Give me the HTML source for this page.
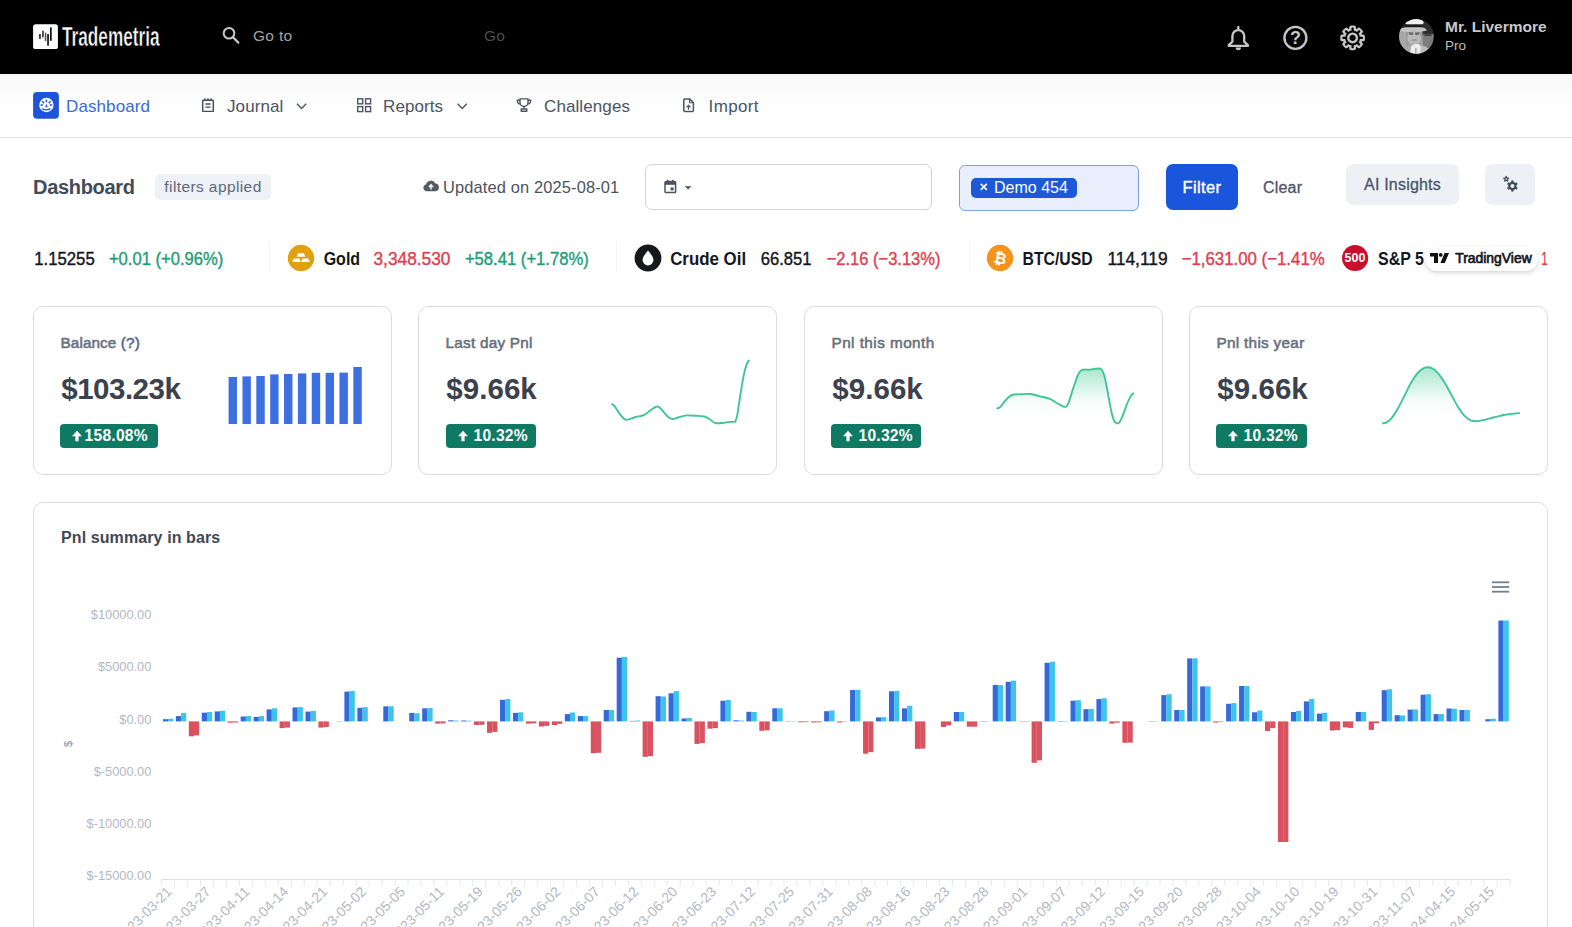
<!DOCTYPE html>
<html><head><meta charset="utf-8"><title>Trademetria</title>
<style>
*{box-sizing:border-box;margin:0;padding:0}
html,body{width:1572px;height:927px;overflow:hidden;background:#fff}
body{font-family:"Liberation Sans",sans-serif;color:#4a5568;position:relative}
.abs{position:absolute;white-space:nowrap}
svg text{font-family:"Liberation Sans",sans-serif}
.topbar{position:absolute;left:0;top:0;width:1572px;height:74px;background:#000}
.navbar{position:absolute;left:0;top:74px;width:1572px;height:64px;background:linear-gradient(#f7f7f7,#fdfdfd 45%,#fff 70%);border-bottom:1px solid #dedede}
.nav{font-size:17px;color:#4b5563;line-height:20px;letter-spacing:.1px}
.card{position:absolute;border:1px solid #dcdcdc;border-radius:10px;background:#fff}
.ctitle{font-size:15.3px;color:#68707d;-webkit-text-stroke:.55px #68707d;line-height:18px;letter-spacing:.1px}
.cval{font-size:29.5px;font-weight:bold;color:#3b414d;line-height:32px;letter-spacing:-0.2px}
.badge{position:absolute;height:24px;border-radius:4px;background:#0e7a63;color:#fff;font-weight:bold;font-size:15.6px;line-height:24px;letter-spacing:.25px}
.tk{font-size:17.5px;line-height:22px;color:#131722}
.tkb{font-weight:bold}
.up{color:#22a27b}.dn{color:#e0404f}
.sep{position:absolute;top:241px;width:1px;height:32px;background:#f4f4f4}
</style></head>
<body>

<div class="topbar">
 <svg class="abs" style="left:0;top:0" width="1572" height="74" viewBox="0 0 1572 74">
  <!-- logo -->
  <rect x="33.1" y="24.2" width="24.8" height="24.8" rx="2.6" fill="#fff"/>
  <rect x="39.1" y="34.1" width="1.7" height="4.8" fill="#222"/>
  <rect x="42.2" y="30.7" width="1.5" height="6.7" fill="#222"/>
  <rect x="44.8" y="32.7" width="1.5" height="8.5" fill="#555"/>
  <rect x="47.2" y="34.1" width="1.7" height="11.6" fill="#111"/>
  <rect x="50.0" y="27.4" width="1.7" height="13.4" fill="#111"/>
  <text x="62" y="46.3" font-size="28" font-weight="bold" fill="#fff" stroke="#000" stroke-width=".55" textLength="97.5" lengthAdjust="spacingAndGlyphs">Trademetria</text>
  <!-- search -->
  <circle cx="229" cy="33.2" r="5.3" fill="none" stroke="#c8c8c8" stroke-width="2"/>
  <line x1="233" y1="37.3" x2="238.3" y2="42.6" stroke="#c8c8c8" stroke-width="2.2" stroke-linecap="round"/>
  <text x="253" y="41" font-size="15.5" fill="#a3a3a3" letter-spacing="0.3">Go to</text>
  <text x="484" y="41" font-size="15.5" fill="#4d4d4d" letter-spacing="0.3">Go</text>
  <!-- bell -->
  <g fill="none" stroke="#c6c6c6" stroke-width="2.3" stroke-linejoin="round" stroke-linecap="round">
   <path d="M1232.400 41.600 V36 a5.900 5.900 0 0 1 11.800 0 V41.600 l3.700 3.500 v.800 H1228.700 v-.800 z"/>
   <path d="M1238.300 27 v2.200"/>
  </g>
  <path d="M1235.600 47.600 h5.400 a2.700 2.700 0 0 1 -5.400 0 z" fill="#c6c6c6"/>
  <!-- help -->
  <circle cx="1295.400" cy="37.850" r="11" fill="none" stroke="#c6c6c6" stroke-width="2.400"/>
  <text x="1295.500" y="44.300" font-size="18" font-weight="bold" fill="#c6c6c6" text-anchor="middle">?</text>
  <!-- gear -->
  <g transform="translate(1352.600 37.900)">
   <g fill="#c6c6c6"><rect x="-3.400" y="-12.300" width="6.800" height="6" rx="1.900" transform="rotate(0)"/><rect x="-3.400" y="-12.300" width="6.800" height="6" rx="1.900" transform="rotate(45)"/><rect x="-3.400" y="-12.300" width="6.800" height="6" rx="1.900" transform="rotate(90)"/><rect x="-3.400" y="-12.300" width="6.800" height="6" rx="1.900" transform="rotate(135)"/><rect x="-3.400" y="-12.300" width="6.800" height="6" rx="1.900" transform="rotate(180)"/><rect x="-3.400" y="-12.300" width="6.800" height="6" rx="1.900" transform="rotate(225)"/><rect x="-3.400" y="-12.300" width="6.800" height="6" rx="1.900" transform="rotate(270)"/><rect x="-3.400" y="-12.300" width="6.800" height="6" rx="1.900" transform="rotate(315)"/></g>
   <circle r="9.800" fill="#c6c6c6"/>
   <g fill="#000"><rect x="-1.100" y="-10.300" width="2.200" height="4" rx=".8" transform="rotate(0)"/><rect x="-1.100" y="-10.300" width="2.200" height="4" rx=".8" transform="rotate(45)"/><rect x="-1.100" y="-10.300" width="2.200" height="4" rx=".8" transform="rotate(90)"/><rect x="-1.100" y="-10.300" width="2.200" height="4" rx=".8" transform="rotate(135)"/><rect x="-1.100" y="-10.300" width="2.200" height="4" rx=".8" transform="rotate(180)"/><rect x="-1.100" y="-10.300" width="2.200" height="4" rx=".8" transform="rotate(225)"/><rect x="-1.100" y="-10.300" width="2.200" height="4" rx=".8" transform="rotate(270)"/><rect x="-1.100" y="-10.300" width="2.200" height="4" rx=".8" transform="rotate(315)"/></g>
   <circle r="7.400" fill="#000"/>
   <circle r="4.300" fill="none" stroke="#c6c6c6" stroke-width="2.400"/>
  </g>
  <!-- avatar -->
  <defs>
   <clipPath id="avc"><circle cx="1416.4" cy="36.5" r="17.4"/></clipPath>
   <filter id="avb" x="-10%" y="-10%" width="120%" height="120%"><feGaussianBlur stdDeviation=".7"/></filter>
  </defs>
  <g clip-path="url(#avc)"><g filter="url(#avb)">
   <rect x="1396" y="16" width="42" height="42" fill="#9c9c9c"/>
   <rect x="1396" y="16" width="42" height="12" fill="#2a2a2a"/>
   <rect x="1422.500" y="16" width="16" height="20" fill="#2e2e2e"/>
   <rect x="1423" y="34" width="16" height="14" fill="#7b7b7b"/>
   <rect x="1424.500" y="34.300" width="7" height="1.600" fill="#3a3a3a"/>
   <rect x="1396" y="30" width="10" height="28" fill="#a8a8a8"/>
   <ellipse cx="1414.400" cy="22.600" rx="9.300" ry="3.900" fill="#f1f1f1"/>
   <rect x="1405" y="24.300" width="17.600" height="3.200" fill="#1f1f1f"/>
   <path d="M1399.500 30.900 q2 -3.600 7 -3.600 h14 q4.500 0 6.500 3.200 q-6 1.600 -13.500 1.600 t-14 -1.200 z" fill="#c4c4c4"/>
   <ellipse cx="1414.200" cy="38" rx="6.800" ry="7.600" fill="#b9b9b9"/>
   <rect x="1409" y="32.200" width="4.300" height="2.800" rx="1" fill="#6d6d6d"/>
   <rect x="1415" y="32.200" width="4.300" height="2.800" rx="1" fill="#6d6d6d"/>
   <rect x="1411.800" y="39.400" width="5" height="1.300" fill="#8d8d8d"/>
   <path d="M1402 56 l4 -9 l6 -3.500 h6 l8 3 l5 9.500 z" fill="#a9a9a9"/>
   <path d="M1409.700 56 l1.500 -10 l3.300 -2 h3.800 l2.600 2 l-.5 10 z" fill="#ececec"/>
   <rect x="1415.300" y="48" width="1.200" height="8" fill="#9a9a9a"/>
   <path d="M1420.800 46 l6.500 1.500 l4 8.500 h-10.500 z" fill="#bdbdbd"/>
  </g></g>
  <text x="1445" y="32" font-size="15.5" font-weight="bold" fill="#c9c9c9">Mr. Livermore</text>
  <text x="1445" y="49.6" font-size="13.5" fill="#bdbdbd">Pro</text>
 </svg>
</div>
<div class="navbar"></div>
<svg class="abs" style="left:0;top:74px" width="1572" height="64" viewBox="0 74 1572 64">
 <!-- dashboard icon -->
 <rect x="33.1" y="92.1" width="25.8" height="26.7" rx="4" fill="#1d54da"/>
 <circle cx="46.4" cy="105" r="7.2" fill="#fff"/>
 <g stroke="#1d54da" stroke-width="1.5" fill="none" stroke-linecap="butt">
  <path d="M46.4 99.6 v2.6"/><path d="M42.2 101.3 l1.9 1.9"/><path d="M50.6 101.3 l-1.9 1.9"/>
  <path d="M40.6 105 h2.4"/><path d="M52.2 105 h-2.4"/>
  <path d="M42.4 108.6 q4 2.600 8 0" stroke-width="1.4"/>
 </g>
 <path d="M46.400 103.800 l1.300 3.400 h-2.600 z" fill="#1d54da"/>
 <!-- journal icon -->
 <g fill="none" stroke="#454d5a" stroke-width="1.400">
  <rect x="202.700" y="100.200" width="10.600" height="11.200" rx=".5"/>
  <path d="M205 98.300 v2.400 M208 98.300 v2.400 M211 98.300 v2.400"/>
  <path d="M205.400 104 h5.200 M205.400 107.100 h5.200" stroke-width="1.300"/>
 </g>
 <path d="M297 103.8 l4.6 4.6 l4.6 -4.6" fill="none" stroke="#4b5563" stroke-width="1.4"/>
 <!-- reports icon -->
 <g fill="none" stroke="#4b5563" stroke-width="1.4">
  <rect x="357.7" y="98.8" width="5" height="5"/><rect x="365.6" y="98.8" width="5" height="5"/>
  <rect x="357.7" y="106.6" width="5" height="5"/><rect x="365.6" y="106.6" width="5" height="5"/>
 </g>
 <path d="M457.6 103.8 l4.6 4.6 l4.6 -4.6" fill="none" stroke="#4b5563" stroke-width="1.4"/>
 <!-- trophy -->
 <g fill="none" stroke="#4b5563" stroke-width="1.4" stroke-linejoin="round">
  <path d="M520 98.9 h8 v3.6 a4 4 0 0 1 -8 0 z"/>
  <path d="M520 100.3 h-2.6 v1 a2.6 2.6 0 0 0 2.9 2.6 M528 100.3 h2.6 v1 a2.6 2.6 0 0 1 -2.9 2.6"/>
  <path d="M524 106.6 v2.2 M521.2 111.2 h5.6 v-2.2 h-5.6 z"/>
 </g>
 <!-- import -->
 <g fill="none" stroke="#4b5563" stroke-width="1.4" stroke-linejoin="round">
  <path d="M684.600 98.900 h5 l3.800 3.800 v7.800 a1 1 0 0 1 -1 1 h-7.600 a1 1 0 0 1 -1 -1 v-10.600 a1 1 0 0 1 1 -1 z" stroke-width="1.500"/>
  <path d="M689.600 99 v3.800 h3.800" stroke-width="1.100"/>
 </g>
 <path d="M688.500 109.800 v-4.200 M686.500 107.400 l2 -2 l2 2" fill="none" stroke="#4b5563" stroke-width="1.2"/>
</svg>
<div class="abs nav" style="left:66px;top:96.5px;color:#3a6bd6">Dashboard</div>
<div class="abs nav" style="left:227px;top:96.5px">Journal</div>
<div class="abs nav" style="left:383px;top:96.5px">Reports</div>
<div class="abs nav" style="left:544px;top:96.5px">Challenges</div>
<div class="abs nav" style="left:708.6px;top:96.5px;letter-spacing:.35px">Import</div>

<div class="abs" style="left:33px;top:175px;font-size:20px;font-weight:bold;color:#414b5a;line-height:24px;letter-spacing:-.3px">Dashboard</div>
<div class="abs" style="left:155px;top:174px;width:116px;height:26px;border-radius:5px;background:#eef1f5;color:#5d697a;font-size:15.5px;line-height:26px;text-align:center;letter-spacing:.4px">filters applied</div>
<svg class="abs" style="left:422px;top:178px" width="18" height="16" viewBox="0 0 18 16">
 <path d="M4.6 13.2 a3.4 3.4 0 0 1 -.6 -6.7 a5 5 0 0 1 9.4 -1 a3.9 3.9 0 0 1 .4 7.7 z" fill="#555b63"/>
 <path d="M9 11.4 v-4 M6.9 9 l2.1 -2.2 l2.1 2.2" fill="none" stroke="#fff" stroke-width="1.5"/>
</svg>
<div class="abs" style="left:443px;top:176.7px;font-size:16.4px;line-height:20px;color:#4b5260;letter-spacing:.15px">Updated on 2025-08-01</div>
<div class="abs" style="left:645px;top:164px;width:287px;height:46px;border:1px solid #d4d4d4;border-radius:7px;background:#fff"></div>
<svg class="abs" style="left:662px;top:178px" width="34" height="18" viewBox="0 0 34 18">
 <rect x="3" y="3.6" width="10.6" height="11" rx="1.2" fill="none" stroke="#4b5260" stroke-width="1.5"/>
 <rect x="3" y="3.6" width="10.6" height="3.2" fill="#4b5260"/>
 <rect x="5" y="1.8" width="1.5" height="2.6" fill="#4b5260"/><rect x="10" y="1.8" width="1.5" height="2.6" fill="#4b5260"/>
 <rect x="8.6" y="9.4" width="3" height="3" fill="#4b5260"/>
 <path d="M22.8 8.2 h6.6 l-3.3 3.4 z" fill="#4b5260"/>
</svg>
<div class="abs" style="left:959px;top:165px;width:180px;height:46px;border:1px solid #7f9fe3;border-radius:6px;background:#e8eefc"></div>
<div class="abs" style="left:971px;top:178px;width:106px;height:19.5px;border-radius:5px;background:#1d58d8;color:#fff;font-size:16px;line-height:19.5px;padding-left:23px">Demo 454</div>
<svg class="abs" style="left:979px;top:182px" width="10" height="10" viewBox="0 0 10 10"><path d="M1.8 1.8 l6 6 M7.8 1.8 l-6 6" stroke="#fff" stroke-width="1.7"/></svg>
<div class="abs" style="left:1166px;top:164px;width:72px;height:46px;border-radius:7px;background:#1a56db;color:#fff;font-size:16.5px;font-weight:bold;line-height:47.5px;text-align:center"><span style="font-weight:normal;-webkit-text-stroke:.4px #fff;letter-spacing:.4px">Filter</span></div>
<div class="abs" style="left:1263px;top:177.5px;font-size:16px;line-height:20px;color:#4a5568;-webkit-text-stroke:.3px #4a5568;letter-spacing:.2px">Clear</div>
<div class="abs" style="left:1346px;top:164.3px;width:113px;height:41px;border-radius:7px;background:#edf1f6;color:#4a5568;font-size:16px;line-height:41px;text-align:center;-webkit-text-stroke:.3px #4a5568;letter-spacing:.2px">AI Insights</div>
<div class="abs" style="left:1485px;top:164.3px;width:50px;height:41px;border-radius:7px;background:#edf1f6"></div>
<svg class="abs" style="left:1500px;top:174.3px" width="22" height="22" viewBox="0 0 22 22">
 <g transform="translate(12.4 12)"><circle r="3.1" fill="none" stroke="#3f4a5a" stroke-width="2.2"/>
  <g fill="#3f4a5a"><rect x="-1.1" y="-5.6" width="2.2" height="2.4"/><rect x="-1.1" y="-5.6" width="2.2" height="2.4" transform="rotate(60)"/><rect x="-1.1" y="-5.6" width="2.2" height="2.4" transform="rotate(120)"/><rect x="-1.1" y="-5.6" width="2.2" height="2.4" transform="rotate(180)"/><rect x="-1.1" y="-5.6" width="2.2" height="2.4" transform="rotate(240)"/><rect x="-1.1" y="-5.6" width="2.2" height="2.4" transform="rotate(300)"/></g></g>
 <g transform="translate(6.2 5)"><circle r="1.5" fill="none" stroke="#3f4a5a" stroke-width="1.3"/>
  <g fill="#3f4a5a"><rect x="-.7" y="-3.1" width="1.4" height="1.3"/><rect x="-.7" y="-3.1" width="1.4" height="1.3" transform="rotate(72)"/><rect x="-.7" y="-3.1" width="1.4" height="1.3" transform="rotate(144)"/><rect x="-.7" y="-3.1" width="1.4" height="1.3" transform="rotate(216)"/><rect x="-.7" y="-3.1" width="1.4" height="1.3" transform="rotate(288)"/></g></g>
</svg>

<!-- ticker -->
<div class="sep" style="left:269px"></div>
<div class="sep" style="left:616px"></div>
<div class="sep" style="left:969px"></div>
<svg class="abs" style="left:287px;top:244px" width="28" height="28" viewBox="0 0 28 28">
 <circle cx="14" cy="14" r="13.2" fill="#e0a010"/>
 <path d="M11.2 9.2 h5.6 l1.6 3.6 h-8.8 z" fill="#fff"/>
 <path d="M6.8 14.4 h5.6 l1.4 3.6 h-8.6 z" fill="#fff"/>
 <path d="M15.6 14.4 h5.6 l1.6 3.6 h-8.6 z" fill="#fff"/>
</svg>
<svg class="abs" style="left:633.5px;top:244px" width="28" height="28" viewBox="0 0 28 28">
 <circle cx="14" cy="14" r="13.4" fill="#16181c"/>
 <path d="M14 6.4 c2.6 3.4 5.4 6.4 5.4 9.6 a5.4 5.4 0 0 1 -10.8 0 c0 -3.2 2.8 -6.2 5.4 -9.600 z" fill="#fff"/>
</svg>
<svg class="abs" style="left:986px;top:244px" width="28" height="28" viewBox="0 0 28 28">
 <circle cx="14" cy="14" r="13.2" fill="#f7931a"/>
 <text x="14.4" y="19.6" font-size="15.5" font-weight="bold" fill="#fff" text-anchor="middle" transform="rotate(12 14 14)">&#8383;</text>
</svg>
<svg class="abs" style="left:1341px;top:244px" width="28" height="28" viewBox="0 0 28 28">
 <circle cx="14.100" cy="14" r="13.100" fill="#c8102e"/>
 <text x="3.6" y="18.2" font-size="12" font-weight="bold" fill="#fff" textLength="20.8" lengthAdjust="spacingAndGlyphs">500</text>
</svg>
<svg class="abs" style="left:0;top:240px" width="1572" height="40" viewBox="0 240 1572 40" font-size="18.2">
 <text x="34.3" y="265" fill="#131722" stroke="#131722" stroke-width=".4" textLength="60.4" lengthAdjust="spacingAndGlyphs">1.15255</text>
 <text x="108.9" y="265" fill="#1f9e7a" stroke="#1f9e7a" stroke-width=".4" textLength="114.5" lengthAdjust="spacingAndGlyphs">+0.01 (+0.96%)</text>
 <text x="323.7" y="265" font-weight="bold" fill="#131722" textLength="36.4" lengthAdjust="spacingAndGlyphs">Gold</text>
 <text x="373.5" y="265" fill="#e0404f" stroke="#e0404f" stroke-width=".4" textLength="76.9" lengthAdjust="spacingAndGlyphs">3,348.530</text>
 <text x="464.9" y="265" fill="#1f9e7a" stroke="#1f9e7a" stroke-width=".4" textLength="123.9" lengthAdjust="spacingAndGlyphs">+58.41 (+1.78%)</text>
 <text x="670.2" y="265" font-weight="bold" fill="#131722" textLength="75.9" lengthAdjust="spacingAndGlyphs">Crude Oil</text>
 <text x="760.8" y="265" fill="#131722" stroke="#131722" stroke-width=".4" textLength="50.7" lengthAdjust="spacingAndGlyphs">66.851</text>
 <text x="826.7" y="265" fill="#e0404f" stroke="#e0404f" stroke-width=".4" textLength="113.8" lengthAdjust="spacingAndGlyphs">−2.16 (−3.13%)</text>
 <text x="1022.6" y="265" font-weight="bold" fill="#131722" textLength="70.0" lengthAdjust="spacingAndGlyphs">BTC/USD</text>
 <text x="1107.4" y="265" fill="#131722" stroke="#131722" stroke-width=".4" textLength="60.3" lengthAdjust="spacingAndGlyphs">114,119</text>
 <text x="1181.7" y="265" fill="#e0404f" stroke="#e0404f" stroke-width=".4" textLength="143.0" lengthAdjust="spacingAndGlyphs">−1,631.00 (−1.41%</text>
 <text x="1378.1" y="265" font-weight="bold" fill="#131722" textLength="45.8" lengthAdjust="spacingAndGlyphs">S&amp;P 5</text>
</svg>
<div class="abs" style="left:1425px;top:246.500px;width:112.500px;height:24.500px;border-radius:12.500px;background:#fff;box-shadow:0 2px 4px rgba(0,0,0,.17)"></div>
<svg class="abs" style="left:1424px;top:245px" width="120" height="27" viewBox="1424 245 120 27">
 <path d="M1430 253 h8 v10 h-4 v-6.400 h-4 z" fill="#111"/>
 <circle cx="1440.700" cy="254.900" r="1.900" fill="#111"/>
 <path d="M1444.600 253 h4.400 l-4.200 10 h-4.400 z" fill="#111"/>
 <text x="1455.200" y="262.900" font-size="14.5" fill="#131722" stroke="#131722" stroke-width=".7" textLength="76.500" lengthAdjust="spacingAndGlyphs">TradingView</text>
</svg>
<svg class="abs" style="left:1538px;top:240px" width="34" height="40" viewBox="1538 240 34 40" font-size="18.2"><text x="1541.5" y="265" fill="#e0404f" stroke="#e0404f" stroke-width=".4" textLength="6" lengthAdjust="spacingAndGlyphs">1</text></svg>
<div class="card" style="left:33px;top:306px;width:359px;height:169px"></div>
<div class="abs ctitle" style="left:60.5px;top:334px;letter-spacing:0.1px">Balance <span style="color:#2f55c8">(?)</span></div>
<div class="abs cval" style="left:61.3px;top:373px;letter-spacing:-0.5px">$103.23k</div>
<div class="card" style="left:418px;top:306px;width:359px;height:169px"></div>
<div class="abs ctitle" style="left:445.5px;top:334px;letter-spacing:0.25px">Last day Pnl</div>
<div class="abs cval" style="left:446.3px;top:373px;letter-spacing:0.05px">$9.66k</div>
<div class="card" style="left:804px;top:306px;width:359px;height:169px"></div>
<div class="abs ctitle" style="left:831.5px;top:334px;letter-spacing:0.45px">Pnl this month</div>
<div class="abs cval" style="left:832.3px;top:373px;letter-spacing:0.05px">$9.66k</div>
<div class="card" style="left:1189px;top:306px;width:359px;height:169px"></div>
<div class="abs ctitle" style="left:1216.5px;top:334px;letter-spacing:0.3px">Pnl this year</div>
<div class="abs cval" style="left:1217.3px;top:373px;letter-spacing:0.05px">$9.66k</div>
<div class="badge" style="left:60px;top:424px;width:98px"><svg style="position:absolute;left:11px;top:6px" width="12" height="12" viewBox="0 0 12 12"><path d="M6 .8 L11 6.200 H7.600 V11.200 H4.400 V6.200 H1 Z" fill="#fff"/></svg><span style="position:absolute;left:24.6px;top:0">158.08%</span></div>
<div class="badge" style="left:446px;top:424px;width:90px"><svg style="position:absolute;left:10.5px;top:6px" width="12" height="12" viewBox="0 0 12 12"><path d="M6 .8 L11 6.200 H7.600 V11.200 H4.400 V6.200 H1 Z" fill="#fff"/></svg><span style="position:absolute;left:27.5px;top:0">10.32%</span></div>
<div class="badge" style="left:831px;top:424px;width:90px"><svg style="position:absolute;left:10.5px;top:6px" width="12" height="12" viewBox="0 0 12 12"><path d="M6 .8 L11 6.200 H7.600 V11.200 H4.400 V6.200 H1 Z" fill="#fff"/></svg><span style="position:absolute;left:27.5px;top:0">10.32%</span></div>
<div class="badge" style="left:1216px;top:424px;width:91px"><svg style="position:absolute;left:10.5px;top:6px" width="12" height="12" viewBox="0 0 12 12"><path d="M6 .8 L11 6.200 H7.600 V11.200 H4.400 V6.200 H1 Z" fill="#fff"/></svg><span style="position:absolute;left:27.5px;top:0">10.32%</span></div>
<svg class="abs" style="left:0;top:300px" width="420" height="180" viewBox="0 300 420 180"><rect x="228.60" y="377.0" width="8.4" height="47.0" fill="#3c6fe0"/><rect x="242.46" y="376.4" width="8.4" height="47.6" fill="#3c6fe0"/><rect x="256.32" y="376.0" width="8.4" height="48.0" fill="#3c6fe0"/><rect x="270.18" y="374.4" width="8.4" height="49.6" fill="#3c6fe0"/><rect x="284.04" y="374.0" width="8.4" height="50.0" fill="#3c6fe0"/><rect x="297.90" y="373.4" width="8.4" height="50.6" fill="#3c6fe0"/><rect x="311.76" y="372.8" width="8.4" height="51.2" fill="#3c6fe0"/><rect x="325.62" y="372.8" width="8.4" height="51.2" fill="#3c6fe0"/><rect x="339.48" y="372.6" width="8.4" height="51.4" fill="#3c6fe0"/><rect x="353.34" y="367.0" width="8.4" height="57.0" fill="#3c6fe0"/></svg>
<svg class="abs" style="left:0;top:300px" width="1572" height="180" viewBox="0 300 1572 180"><path d="M611.4 403.7 C611.9 404.1 613.2 404.5 614.6 406.2 C616.0 407.9 618.2 412.2 620.0 414.3 C621.8 416.5 623.4 419.3 626.0 419.8 C628.5 420.2 632.8 417.8 635.7 417.0 C638.5 416.3 641.4 416.3 643.8 415.2 C646.2 414.1 648.8 411.4 650.8 410.0 C652.9 408.6 655.2 406.7 656.8 406.5 C658.3 406.2 658.8 406.8 660.6 408.4 C662.3 410.0 665.7 414.8 667.6 416.5 C669.5 418.2 670.6 418.9 672.5 419.0 C674.3 419.1 676.7 417.8 678.9 417.3 C681.2 416.7 683.7 415.7 686.5 415.4 C689.3 415.2 693.4 415.6 696.2 415.8 C699.1 415.9 702.1 415.9 704.4 416.5 C706.6 417.1 708.6 418.7 710.3 419.8 C712.0 420.8 713.3 422.5 715.2 423.0 C717.1 423.5 719.9 423.2 722.2 423.0 C724.5 422.8 727.7 422.1 729.8 421.9 C731.8 421.7 734.3 421.7 735.2 421.7 L735.2 421.7 C735.5 420.6 736.5 419.4 737.3 414.9 C738.2 410.3 739.5 399.7 740.6 393.3 C741.6 386.9 742.9 379.5 743.8 374.9 C744.8 370.3 745.7 367.0 746.5 364.6 C747.4 362.2 748.8 360.7 749.2 359.9" fill="none" stroke="#3fc695" stroke-width="1.9" stroke-linejoin="round" stroke-linecap="butt"/></svg>
<svg class="abs" style="left:0;top:300px" width="1572" height="180" viewBox="0 300 1572 180"><defs><linearGradient id="g3" gradientUnits="userSpaceOnUse" x1="0" y1="367" x2="0" y2="414"><stop offset="0" stop-color="#3fc695" stop-opacity=".45"/><stop offset=".7" stop-color="#3fc695" stop-opacity=".06"/><stop offset="1" stop-color="#3fc695" stop-opacity="0"/></linearGradient></defs><path d="M996.4 408.7 C997.2 408.3 998.5 408.4 1000.4 406.7 C1002.3 404.9 1003.5 402.3 1005.9 400.0 C1008.2 397.6 1009.1 396.2 1012.1 395.0 C1015.1 393.9 1017.0 394.5 1020.8 394.3 C1024.5 394.1 1027.0 393.6 1030.7 394.0 C1034.4 394.4 1035.6 395.3 1039.4 396.3 C1043.1 397.2 1045.6 397.3 1049.3 398.7 C1053.0 400.2 1055.0 402.1 1058.0 403.7 C1061.0 405.3 1062.2 406.6 1064.2 406.7 C1066.2 406.8 1065.9 408.4 1067.9 404.2 C1069.9 400.0 1071.6 392.2 1074.1 385.6 C1076.6 379.0 1077.3 374.4 1080.3 371.2 C1083.3 368.0 1085.8 370.2 1089.0 369.7 C1092.2 369.2 1094.0 368.8 1096.4 368.7 C1098.9 368.6 1099.6 367.8 1101.1 369.2 C1102.7 370.6 1103.0 370.7 1104.4 375.7 C1105.8 380.7 1106.5 386.1 1108.1 394.3 C1109.7 402.5 1110.8 410.8 1112.6 416.6 C1114.3 422.4 1115.3 422.8 1117.0 423.3 C1118.8 423.8 1119.2 423.2 1121.2 419.1 C1123.3 415.0 1125.5 407.7 1127.4 403.0 C1129.4 398.2 1129.8 397.5 1131.2 395.5 C1132.5 393.5 1133.5 393.5 1134.1 393.0 L1134.1 424 L996.4 424 Z" fill="url(#g3)"/><path d="M996.4 408.7 C997.2 408.3 998.5 408.4 1000.4 406.7 C1002.3 404.9 1003.5 402.3 1005.9 400.0 C1008.2 397.6 1009.1 396.2 1012.1 395.0 C1015.1 393.9 1017.0 394.5 1020.8 394.3 C1024.5 394.1 1027.0 393.6 1030.7 394.0 C1034.4 394.4 1035.6 395.3 1039.4 396.3 C1043.1 397.2 1045.6 397.3 1049.3 398.7 C1053.0 400.2 1055.0 402.1 1058.0 403.7 C1061.0 405.3 1062.2 406.6 1064.2 406.7 C1066.2 406.8 1065.9 408.4 1067.9 404.2 C1069.9 400.0 1071.6 392.2 1074.1 385.6 C1076.6 379.0 1077.3 374.4 1080.3 371.2 C1083.3 368.0 1085.8 370.2 1089.0 369.7 C1092.2 369.2 1094.0 368.8 1096.4 368.7 C1098.9 368.6 1099.6 367.8 1101.1 369.2 C1102.7 370.6 1103.0 370.7 1104.4 375.7 C1105.8 380.7 1106.5 386.1 1108.1 394.3 C1109.7 402.5 1110.8 410.8 1112.6 416.6 C1114.3 422.4 1115.3 422.8 1117.0 423.3 C1118.8 423.8 1119.2 423.2 1121.2 419.1 C1123.3 415.0 1125.5 407.7 1127.4 403.0 C1129.4 398.2 1129.8 397.5 1131.2 395.5 C1132.5 393.5 1133.5 393.5 1134.1 393.0" fill="none" stroke="#3fc695" stroke-width="1.9" stroke-linejoin="round" stroke-linecap="butt"/></svg>
<svg class="abs" style="left:0;top:300px" width="1572" height="180" viewBox="0 300 1572 180"><defs><linearGradient id="g4" gradientUnits="userSpaceOnUse" x1="0" y1="367" x2="0" y2="414"><stop offset="0" stop-color="#3fc695" stop-opacity=".45"/><stop offset=".7" stop-color="#3fc695" stop-opacity=".06"/><stop offset="1" stop-color="#3fc695" stop-opacity="0"/></linearGradient></defs><path d="M1382.1 423.3 C1382.8 423.2 1384.6 423.6 1386.2 422.7 C1387.8 421.8 1389.8 420.3 1391.6 418.1 C1393.5 416.0 1395.0 413.5 1397.0 410.0 C1399.1 406.5 1401.3 401.9 1403.5 397.6 C1405.7 393.3 1407.8 388.6 1410.0 384.6 C1412.2 380.7 1414.5 376.9 1416.5 374.3 C1418.5 371.7 1420.1 370.4 1421.9 369.2 C1423.7 368.1 1425.5 367.4 1427.3 367.3 C1429.2 367.2 1430.9 367.6 1432.7 368.6 C1434.6 369.6 1436.1 370.9 1438.1 373.3 C1440.2 375.6 1442.4 378.9 1444.6 382.4 C1446.8 386.0 1448.9 390.3 1451.1 394.3 C1453.3 398.4 1455.4 402.6 1457.6 406.2 C1459.8 409.8 1461.9 413.0 1464.1 415.4 C1466.3 417.8 1468.4 419.3 1470.6 420.3 C1472.8 421.2 1474.7 421.1 1477.1 421.1 C1479.5 421.0 1481.7 420.4 1484.6 419.8 C1487.6 419.1 1490.9 418.1 1494.4 417.3 C1497.9 416.4 1501.9 415.3 1505.2 414.7 C1508.5 414.0 1511.3 413.9 1513.8 413.6 C1516.3 413.3 1518.8 413.1 1519.8 413.0 L1519.8 424 L1382.1 424 Z" fill="url(#g4)"/><path d="M1382.1 423.3 C1382.8 423.2 1384.6 423.6 1386.2 422.7 C1387.8 421.8 1389.8 420.3 1391.6 418.1 C1393.5 416.0 1395.0 413.5 1397.0 410.0 C1399.1 406.5 1401.3 401.9 1403.5 397.6 C1405.7 393.3 1407.8 388.6 1410.0 384.6 C1412.2 380.7 1414.5 376.9 1416.5 374.3 C1418.5 371.7 1420.1 370.4 1421.9 369.2 C1423.7 368.1 1425.5 367.4 1427.3 367.3 C1429.2 367.2 1430.9 367.6 1432.7 368.6 C1434.6 369.6 1436.1 370.9 1438.1 373.3 C1440.2 375.6 1442.4 378.9 1444.6 382.4 C1446.8 386.0 1448.9 390.3 1451.1 394.3 C1453.3 398.4 1455.4 402.6 1457.6 406.2 C1459.8 409.8 1461.9 413.0 1464.1 415.4 C1466.3 417.8 1468.4 419.3 1470.6 420.3 C1472.8 421.2 1474.7 421.1 1477.1 421.1 C1479.5 421.0 1481.7 420.4 1484.6 419.8 C1487.6 419.1 1490.9 418.1 1494.4 417.3 C1497.9 416.4 1501.9 415.3 1505.2 414.7 C1508.5 414.0 1511.3 413.9 1513.8 413.6 C1516.3 413.3 1518.8 413.1 1519.8 413.0" fill="none" stroke="#3fc695" stroke-width="1.9" stroke-linejoin="round" stroke-linecap="butt"/></svg><div class="card" style="left:33px;top:502px;width:1515px;height:500px"></div>
<div class="abs" style="left:61px;top:528px;font-size:16px;font-weight:bold;color:#3f4856;line-height:20px;letter-spacing:.1px">Pnl summary in bars</div>
<svg class="chart" width="1572" height="927" viewBox="0 0 1572 927" style="position:absolute;left:0;top:0;overflow:hidden">
<text x="151.3" y="619.2" text-anchor="end" font-size="12.8" fill="#b2b8c3">$10000.00</text>
<text x="151.3" y="671.3" text-anchor="end" font-size="12.8" fill="#b2b8c3">$5000.00</text>
<text x="151.3" y="723.5" text-anchor="end" font-size="12.8" fill="#b2b8c3">$0.00</text>
<text x="151.3" y="775.6" text-anchor="end" font-size="12.8" fill="#b2b8c3">$-5000.00</text>
<text x="151.3" y="827.7" text-anchor="end" font-size="12.8" fill="#b2b8c3">$-10000.00</text>
<text x="151.3" y="879.8" text-anchor="end" font-size="12.8" fill="#b2b8c3">$-15000.00</text>
<text x="72" y="744" font-size="11" fill="#8b96a5" transform="rotate(-90 72 744)" text-anchor="middle">$</text>
<line x1="161.6" y1="879.5" x2="1510.1" y2="879.5" stroke="#e0e0e0" stroke-width="1.2"/>
<line x1="161.60" y1="879.5" x2="161.60" y2="886.0" stroke="#e9e9e9" stroke-width="1"/>
<line x1="174.57" y1="879.5" x2="174.57" y2="886.0" stroke="#e9e9e9" stroke-width="1"/>
<line x1="187.53" y1="879.5" x2="187.53" y2="886.0" stroke="#e9e9e9" stroke-width="1"/>
<line x1="200.50" y1="879.5" x2="200.50" y2="886.0" stroke="#e9e9e9" stroke-width="1"/>
<line x1="213.46" y1="879.5" x2="213.46" y2="886.0" stroke="#e9e9e9" stroke-width="1"/>
<line x1="226.43" y1="879.5" x2="226.43" y2="886.0" stroke="#e9e9e9" stroke-width="1"/>
<line x1="239.40" y1="879.5" x2="239.40" y2="886.0" stroke="#e9e9e9" stroke-width="1"/>
<line x1="252.36" y1="879.5" x2="252.36" y2="886.0" stroke="#e9e9e9" stroke-width="1"/>
<line x1="265.33" y1="879.5" x2="265.33" y2="886.0" stroke="#e9e9e9" stroke-width="1"/>
<line x1="278.29" y1="879.5" x2="278.29" y2="886.0" stroke="#e9e9e9" stroke-width="1"/>
<line x1="291.26" y1="879.5" x2="291.26" y2="886.0" stroke="#e9e9e9" stroke-width="1"/>
<line x1="304.23" y1="879.5" x2="304.23" y2="886.0" stroke="#e9e9e9" stroke-width="1"/>
<line x1="317.19" y1="879.5" x2="317.19" y2="886.0" stroke="#e9e9e9" stroke-width="1"/>
<line x1="330.16" y1="879.5" x2="330.16" y2="886.0" stroke="#e9e9e9" stroke-width="1"/>
<line x1="343.12" y1="879.5" x2="343.12" y2="886.0" stroke="#e9e9e9" stroke-width="1"/>
<line x1="356.09" y1="879.5" x2="356.09" y2="886.0" stroke="#e9e9e9" stroke-width="1"/>
<line x1="369.06" y1="879.5" x2="369.06" y2="886.0" stroke="#e9e9e9" stroke-width="1"/>
<line x1="382.02" y1="879.5" x2="382.02" y2="886.0" stroke="#e9e9e9" stroke-width="1"/>
<line x1="394.99" y1="879.5" x2="394.99" y2="886.0" stroke="#e9e9e9" stroke-width="1"/>
<line x1="407.95" y1="879.5" x2="407.95" y2="886.0" stroke="#e9e9e9" stroke-width="1"/>
<line x1="420.92" y1="879.5" x2="420.92" y2="886.0" stroke="#e9e9e9" stroke-width="1"/>
<line x1="433.89" y1="879.5" x2="433.89" y2="886.0" stroke="#e9e9e9" stroke-width="1"/>
<line x1="446.85" y1="879.5" x2="446.85" y2="886.0" stroke="#e9e9e9" stroke-width="1"/>
<line x1="459.82" y1="879.5" x2="459.82" y2="886.0" stroke="#e9e9e9" stroke-width="1"/>
<line x1="472.78" y1="879.5" x2="472.78" y2="886.0" stroke="#e9e9e9" stroke-width="1"/>
<line x1="485.75" y1="879.5" x2="485.75" y2="886.0" stroke="#e9e9e9" stroke-width="1"/>
<line x1="498.72" y1="879.5" x2="498.72" y2="886.0" stroke="#e9e9e9" stroke-width="1"/>
<line x1="511.68" y1="879.5" x2="511.68" y2="886.0" stroke="#e9e9e9" stroke-width="1"/>
<line x1="524.65" y1="879.5" x2="524.65" y2="886.0" stroke="#e9e9e9" stroke-width="1"/>
<line x1="537.61" y1="879.5" x2="537.61" y2="886.0" stroke="#e9e9e9" stroke-width="1"/>
<line x1="550.58" y1="879.5" x2="550.58" y2="886.0" stroke="#e9e9e9" stroke-width="1"/>
<line x1="563.55" y1="879.5" x2="563.55" y2="886.0" stroke="#e9e9e9" stroke-width="1"/>
<line x1="576.51" y1="879.5" x2="576.51" y2="886.0" stroke="#e9e9e9" stroke-width="1"/>
<line x1="589.48" y1="879.5" x2="589.48" y2="886.0" stroke="#e9e9e9" stroke-width="1"/>
<line x1="602.44" y1="879.5" x2="602.44" y2="886.0" stroke="#e9e9e9" stroke-width="1"/>
<line x1="615.41" y1="879.5" x2="615.41" y2="886.0" stroke="#e9e9e9" stroke-width="1"/>
<line x1="628.38" y1="879.5" x2="628.38" y2="886.0" stroke="#e9e9e9" stroke-width="1"/>
<line x1="641.34" y1="879.5" x2="641.34" y2="886.0" stroke="#e9e9e9" stroke-width="1"/>
<line x1="654.31" y1="879.5" x2="654.31" y2="886.0" stroke="#e9e9e9" stroke-width="1"/>
<line x1="667.27" y1="879.5" x2="667.27" y2="886.0" stroke="#e9e9e9" stroke-width="1"/>
<line x1="680.24" y1="879.5" x2="680.24" y2="886.0" stroke="#e9e9e9" stroke-width="1"/>
<line x1="693.21" y1="879.5" x2="693.21" y2="886.0" stroke="#e9e9e9" stroke-width="1"/>
<line x1="706.17" y1="879.5" x2="706.17" y2="886.0" stroke="#e9e9e9" stroke-width="1"/>
<line x1="719.14" y1="879.5" x2="719.14" y2="886.0" stroke="#e9e9e9" stroke-width="1"/>
<line x1="732.10" y1="879.5" x2="732.10" y2="886.0" stroke="#e9e9e9" stroke-width="1"/>
<line x1="745.07" y1="879.5" x2="745.07" y2="886.0" stroke="#e9e9e9" stroke-width="1"/>
<line x1="758.04" y1="879.5" x2="758.04" y2="886.0" stroke="#e9e9e9" stroke-width="1"/>
<line x1="771.00" y1="879.5" x2="771.00" y2="886.0" stroke="#e9e9e9" stroke-width="1"/>
<line x1="783.97" y1="879.5" x2="783.97" y2="886.0" stroke="#e9e9e9" stroke-width="1"/>
<line x1="796.93" y1="879.5" x2="796.93" y2="886.0" stroke="#e9e9e9" stroke-width="1"/>
<line x1="809.90" y1="879.5" x2="809.90" y2="886.0" stroke="#e9e9e9" stroke-width="1"/>
<line x1="822.87" y1="879.5" x2="822.87" y2="886.0" stroke="#e9e9e9" stroke-width="1"/>
<line x1="835.83" y1="879.5" x2="835.83" y2="886.0" stroke="#e9e9e9" stroke-width="1"/>
<line x1="848.80" y1="879.5" x2="848.80" y2="886.0" stroke="#e9e9e9" stroke-width="1"/>
<line x1="861.76" y1="879.5" x2="861.76" y2="886.0" stroke="#e9e9e9" stroke-width="1"/>
<line x1="874.73" y1="879.5" x2="874.73" y2="886.0" stroke="#e9e9e9" stroke-width="1"/>
<line x1="887.70" y1="879.5" x2="887.70" y2="886.0" stroke="#e9e9e9" stroke-width="1"/>
<line x1="900.66" y1="879.5" x2="900.66" y2="886.0" stroke="#e9e9e9" stroke-width="1"/>
<line x1="913.63" y1="879.5" x2="913.63" y2="886.0" stroke="#e9e9e9" stroke-width="1"/>
<line x1="926.59" y1="879.5" x2="926.59" y2="886.0" stroke="#e9e9e9" stroke-width="1"/>
<line x1="939.56" y1="879.5" x2="939.56" y2="886.0" stroke="#e9e9e9" stroke-width="1"/>
<line x1="952.53" y1="879.5" x2="952.53" y2="886.0" stroke="#e9e9e9" stroke-width="1"/>
<line x1="965.49" y1="879.5" x2="965.49" y2="886.0" stroke="#e9e9e9" stroke-width="1"/>
<line x1="978.46" y1="879.5" x2="978.46" y2="886.0" stroke="#e9e9e9" stroke-width="1"/>
<line x1="991.42" y1="879.5" x2="991.42" y2="886.0" stroke="#e9e9e9" stroke-width="1"/>
<line x1="1004.39" y1="879.5" x2="1004.39" y2="886.0" stroke="#e9e9e9" stroke-width="1"/>
<line x1="1017.36" y1="879.5" x2="1017.36" y2="886.0" stroke="#e9e9e9" stroke-width="1"/>
<line x1="1030.32" y1="879.5" x2="1030.32" y2="886.0" stroke="#e9e9e9" stroke-width="1"/>
<line x1="1043.29" y1="879.5" x2="1043.29" y2="886.0" stroke="#e9e9e9" stroke-width="1"/>
<line x1="1056.25" y1="879.5" x2="1056.25" y2="886.0" stroke="#e9e9e9" stroke-width="1"/>
<line x1="1069.22" y1="879.5" x2="1069.22" y2="886.0" stroke="#e9e9e9" stroke-width="1"/>
<line x1="1082.19" y1="879.5" x2="1082.19" y2="886.0" stroke="#e9e9e9" stroke-width="1"/>
<line x1="1095.15" y1="879.5" x2="1095.15" y2="886.0" stroke="#e9e9e9" stroke-width="1"/>
<line x1="1108.12" y1="879.5" x2="1108.12" y2="886.0" stroke="#e9e9e9" stroke-width="1"/>
<line x1="1121.08" y1="879.5" x2="1121.08" y2="886.0" stroke="#e9e9e9" stroke-width="1"/>
<line x1="1134.05" y1="879.5" x2="1134.05" y2="886.0" stroke="#e9e9e9" stroke-width="1"/>
<line x1="1147.02" y1="879.5" x2="1147.02" y2="886.0" stroke="#e9e9e9" stroke-width="1"/>
<line x1="1159.98" y1="879.5" x2="1159.98" y2="886.0" stroke="#e9e9e9" stroke-width="1"/>
<line x1="1172.95" y1="879.5" x2="1172.95" y2="886.0" stroke="#e9e9e9" stroke-width="1"/>
<line x1="1185.91" y1="879.5" x2="1185.91" y2="886.0" stroke="#e9e9e9" stroke-width="1"/>
<line x1="1198.88" y1="879.5" x2="1198.88" y2="886.0" stroke="#e9e9e9" stroke-width="1"/>
<line x1="1211.85" y1="879.5" x2="1211.85" y2="886.0" stroke="#e9e9e9" stroke-width="1"/>
<line x1="1224.81" y1="879.5" x2="1224.81" y2="886.0" stroke="#e9e9e9" stroke-width="1"/>
<line x1="1237.78" y1="879.5" x2="1237.78" y2="886.0" stroke="#e9e9e9" stroke-width="1"/>
<line x1="1250.74" y1="879.5" x2="1250.74" y2="886.0" stroke="#e9e9e9" stroke-width="1"/>
<line x1="1263.71" y1="879.5" x2="1263.71" y2="886.0" stroke="#e9e9e9" stroke-width="1"/>
<line x1="1276.68" y1="879.5" x2="1276.68" y2="886.0" stroke="#e9e9e9" stroke-width="1"/>
<line x1="1289.64" y1="879.5" x2="1289.64" y2="886.0" stroke="#e9e9e9" stroke-width="1"/>
<line x1="1302.61" y1="879.5" x2="1302.61" y2="886.0" stroke="#e9e9e9" stroke-width="1"/>
<line x1="1315.57" y1="879.5" x2="1315.57" y2="886.0" stroke="#e9e9e9" stroke-width="1"/>
<line x1="1328.54" y1="879.5" x2="1328.54" y2="886.0" stroke="#e9e9e9" stroke-width="1"/>
<line x1="1341.51" y1="879.5" x2="1341.51" y2="886.0" stroke="#e9e9e9" stroke-width="1"/>
<line x1="1354.47" y1="879.5" x2="1354.47" y2="886.0" stroke="#e9e9e9" stroke-width="1"/>
<line x1="1367.44" y1="879.5" x2="1367.44" y2="886.0" stroke="#e9e9e9" stroke-width="1"/>
<line x1="1380.40" y1="879.5" x2="1380.40" y2="886.0" stroke="#e9e9e9" stroke-width="1"/>
<line x1="1393.37" y1="879.5" x2="1393.37" y2="886.0" stroke="#e9e9e9" stroke-width="1"/>
<line x1="1406.34" y1="879.5" x2="1406.34" y2="886.0" stroke="#e9e9e9" stroke-width="1"/>
<line x1="1419.30" y1="879.5" x2="1419.30" y2="886.0" stroke="#e9e9e9" stroke-width="1"/>
<line x1="1432.27" y1="879.5" x2="1432.27" y2="886.0" stroke="#e9e9e9" stroke-width="1"/>
<line x1="1445.23" y1="879.5" x2="1445.23" y2="886.0" stroke="#e9e9e9" stroke-width="1"/>
<line x1="1458.20" y1="879.5" x2="1458.20" y2="886.0" stroke="#e9e9e9" stroke-width="1"/>
<line x1="1471.17" y1="879.5" x2="1471.17" y2="886.0" stroke="#e9e9e9" stroke-width="1"/>
<line x1="1484.13" y1="879.5" x2="1484.13" y2="886.0" stroke="#e9e9e9" stroke-width="1"/>
<line x1="1497.10" y1="879.5" x2="1497.10" y2="886.0" stroke="#e9e9e9" stroke-width="1"/>
<line x1="1510.06" y1="879.5" x2="1510.06" y2="886.0" stroke="#e9e9e9" stroke-width="1"/>
<rect x="162.88" y="719.20" width="5.2" height="2.20" fill="#3568d9"/>
<rect x="168.08" y="718.70" width="5.2" height="2.70" fill="#3ec4e8"/>
<rect x="175.85" y="716.10" width="5.2" height="5.30" fill="#3568d9"/>
<rect x="181.05" y="712.90" width="5.2" height="8.50" fill="#3ec4e8"/>
<rect x="188.81" y="721.40" width="5.2" height="14.90" fill="#d9505e"/>
<rect x="194.01" y="721.40" width="5.2" height="14.00" fill="#db5361"/>
<rect x="201.78" y="712.70" width="5.2" height="8.70" fill="#3568d9"/>
<rect x="206.98" y="712.00" width="5.2" height="9.40" fill="#3ec4e8"/>
<rect x="214.75" y="711.40" width="5.2" height="10.00" fill="#3568d9"/>
<rect x="219.95" y="710.70" width="5.2" height="10.70" fill="#3ec4e8"/>
<rect x="227.71" y="721.40" width="5.2" height="1.30" fill="#d9505e"/>
<rect x="232.91" y="721.40" width="5.2" height="1.10" fill="#db5361"/>
<rect x="240.68" y="716.50" width="5.2" height="4.90" fill="#3568d9"/>
<rect x="245.88" y="716.10" width="5.2" height="5.30" fill="#3ec4e8"/>
<rect x="253.64" y="716.90" width="5.2" height="4.50" fill="#3568d9"/>
<rect x="258.84" y="716.10" width="5.2" height="5.30" fill="#3ec4e8"/>
<rect x="266.61" y="709.40" width="5.2" height="12.00" fill="#3568d9"/>
<rect x="271.81" y="708.30" width="5.2" height="13.10" fill="#3ec4e8"/>
<rect x="279.58" y="721.40" width="5.2" height="6.70" fill="#d9505e"/>
<rect x="284.78" y="721.40" width="5.2" height="6.20" fill="#db5361"/>
<rect x="292.54" y="707.40" width="5.2" height="14.00" fill="#3568d9"/>
<rect x="297.74" y="707.10" width="5.2" height="14.30" fill="#3ec4e8"/>
<rect x="305.51" y="711.60" width="5.2" height="9.80" fill="#3568d9"/>
<rect x="310.71" y="710.90" width="5.2" height="10.50" fill="#3ec4e8"/>
<rect x="318.48" y="721.40" width="5.2" height="6.20" fill="#d9505e"/>
<rect x="323.68" y="721.40" width="5.2" height="5.60" fill="#db5361"/>
<rect x="336.64" y="721.00" width="5.2" height="0.40" fill="#3ec4e8"/>
<rect x="344.41" y="691.60" width="5.2" height="29.80" fill="#3568d9"/>
<rect x="349.61" y="690.90" width="5.2" height="30.50" fill="#3ec4e8"/>
<rect x="357.37" y="707.80" width="5.2" height="13.60" fill="#3568d9"/>
<rect x="362.57" y="707.10" width="5.2" height="14.30" fill="#3ec4e8"/>
<rect x="383.31" y="706.30" width="5.2" height="15.10" fill="#3568d9"/>
<rect x="388.50" y="706.30" width="5.2" height="15.10" fill="#3ec4e8"/>
<rect x="409.24" y="712.90" width="5.2" height="8.50" fill="#3568d9"/>
<rect x="414.44" y="713.20" width="5.2" height="8.20" fill="#3ec4e8"/>
<rect x="422.20" y="708.30" width="5.2" height="13.10" fill="#3568d9"/>
<rect x="427.40" y="708.00" width="5.2" height="13.40" fill="#3ec4e8"/>
<rect x="435.17" y="721.40" width="5.2" height="2.20" fill="#d9505e"/>
<rect x="440.37" y="721.40" width="5.2" height="2.00" fill="#db5361"/>
<rect x="448.13" y="720.30" width="5.2" height="1.10" fill="#3568d9"/>
<rect x="453.33" y="720.50" width="5.2" height="0.90" fill="#3ec4e8"/>
<rect x="461.10" y="720.50" width="5.2" height="0.90" fill="#3568d9"/>
<rect x="466.30" y="720.70" width="5.2" height="0.70" fill="#3ec4e8"/>
<rect x="474.07" y="721.40" width="5.2" height="3.60" fill="#d9505e"/>
<rect x="479.27" y="721.40" width="5.2" height="3.40" fill="#db5361"/>
<rect x="487.03" y="721.40" width="5.2" height="11.40" fill="#d9505e"/>
<rect x="492.23" y="721.40" width="5.2" height="10.50" fill="#db5361"/>
<rect x="500.00" y="699.80" width="5.2" height="21.60" fill="#3568d9"/>
<rect x="505.20" y="699.10" width="5.2" height="22.30" fill="#3ec4e8"/>
<rect x="512.97" y="712.90" width="5.2" height="8.50" fill="#3568d9"/>
<rect x="518.17" y="712.30" width="5.2" height="9.10" fill="#3ec4e8"/>
<rect x="525.93" y="721.40" width="5.2" height="2.20" fill="#d9505e"/>
<rect x="531.13" y="721.40" width="5.2" height="2.00" fill="#db5361"/>
<rect x="538.90" y="721.40" width="5.2" height="5.10" fill="#d9505e"/>
<rect x="544.10" y="721.40" width="5.2" height="4.50" fill="#db5361"/>
<rect x="551.86" y="721.40" width="5.2" height="3.60" fill="#d9505e"/>
<rect x="557.06" y="721.40" width="5.2" height="2.40" fill="#db5361"/>
<rect x="564.83" y="714.10" width="5.2" height="7.30" fill="#3568d9"/>
<rect x="570.03" y="712.50" width="5.2" height="8.90" fill="#3ec4e8"/>
<rect x="577.79" y="716.10" width="5.2" height="5.30" fill="#3568d9"/>
<rect x="583.00" y="716.10" width="5.2" height="5.30" fill="#3ec4e8"/>
<rect x="590.76" y="721.40" width="5.2" height="31.80" fill="#d9505e"/>
<rect x="595.96" y="721.40" width="5.2" height="31.40" fill="#db5361"/>
<rect x="603.73" y="710.00" width="5.2" height="11.40" fill="#3568d9"/>
<rect x="608.93" y="710.00" width="5.2" height="11.40" fill="#3ec4e8"/>
<rect x="616.69" y="657.70" width="5.2" height="63.70" fill="#3568d9"/>
<rect x="621.89" y="657.00" width="5.2" height="64.40" fill="#3ec4e8"/>
<rect x="629.66" y="721.40" width="5.2" height="0.50" fill="#d9505e"/>
<rect x="634.86" y="720.50" width="5.2" height="0.90" fill="#3ec4e8"/>
<rect x="642.62" y="721.40" width="5.2" height="35.40" fill="#d9505e"/>
<rect x="647.83" y="721.40" width="5.2" height="34.70" fill="#db5361"/>
<rect x="655.59" y="696.20" width="5.2" height="25.20" fill="#3568d9"/>
<rect x="660.79" y="696.50" width="5.2" height="24.90" fill="#3ec4e8"/>
<rect x="668.56" y="693.30" width="5.2" height="28.10" fill="#3568d9"/>
<rect x="673.76" y="691.10" width="5.2" height="30.30" fill="#3ec4e8"/>
<rect x="681.52" y="718.50" width="5.2" height="2.90" fill="#3568d9"/>
<rect x="686.72" y="718.10" width="5.2" height="3.30" fill="#3ec4e8"/>
<rect x="694.49" y="721.40" width="5.2" height="22.50" fill="#d9505e"/>
<rect x="699.69" y="721.40" width="5.2" height="21.60" fill="#db5361"/>
<rect x="707.46" y="721.40" width="5.2" height="7.30" fill="#d9505e"/>
<rect x="712.66" y="721.40" width="5.2" height="6.70" fill="#db5361"/>
<rect x="720.42" y="700.70" width="5.2" height="20.70" fill="#3568d9"/>
<rect x="725.62" y="700.00" width="5.2" height="21.40" fill="#3ec4e8"/>
<rect x="733.39" y="720.30" width="5.2" height="1.10" fill="#3568d9"/>
<rect x="738.59" y="720.50" width="5.2" height="0.90" fill="#3ec4e8"/>
<rect x="746.35" y="711.80" width="5.2" height="9.60" fill="#3568d9"/>
<rect x="751.55" y="712.00" width="5.2" height="9.40" fill="#3ec4e8"/>
<rect x="759.32" y="721.40" width="5.2" height="9.40" fill="#d9505e"/>
<rect x="764.52" y="721.40" width="5.2" height="8.90" fill="#db5361"/>
<rect x="772.28" y="708.30" width="5.2" height="13.10" fill="#3568d9"/>
<rect x="777.49" y="708.30" width="5.2" height="13.10" fill="#3ec4e8"/>
<rect x="785.25" y="721.10" width="5.2" height="0.30" fill="#3568d9"/>
<rect x="790.45" y="721.10" width="5.2" height="0.30" fill="#3ec4e8"/>
<rect x="798.22" y="721.40" width="5.2" height="0.90" fill="#d9505e"/>
<rect x="803.42" y="721.40" width="5.2" height="0.70" fill="#db5361"/>
<rect x="811.18" y="721.40" width="5.2" height="1.10" fill="#d9505e"/>
<rect x="816.38" y="721.40" width="5.2" height="0.90" fill="#db5361"/>
<rect x="824.15" y="711.20" width="5.2" height="10.20" fill="#3568d9"/>
<rect x="829.35" y="710.50" width="5.2" height="10.90" fill="#3ec4e8"/>
<rect x="837.12" y="721.40" width="5.2" height="1.10" fill="#d9505e"/>
<rect x="842.32" y="721.40" width="5.2" height="0.30" fill="#db5361"/>
<rect x="850.08" y="690.00" width="5.2" height="31.40" fill="#3568d9"/>
<rect x="855.28" y="689.80" width="5.2" height="31.60" fill="#3ec4e8"/>
<rect x="863.05" y="721.40" width="5.2" height="32.30" fill="#d9505e"/>
<rect x="868.25" y="721.40" width="5.2" height="30.70" fill="#db5361"/>
<rect x="876.01" y="717.40" width="5.2" height="4.00" fill="#3568d9"/>
<rect x="881.21" y="717.20" width="5.2" height="4.20" fill="#3ec4e8"/>
<rect x="888.98" y="691.30" width="5.2" height="30.10" fill="#3568d9"/>
<rect x="894.18" y="690.90" width="5.2" height="30.50" fill="#3ec4e8"/>
<rect x="901.95" y="708.30" width="5.2" height="13.10" fill="#3568d9"/>
<rect x="907.15" y="705.80" width="5.2" height="15.60" fill="#3ec4e8"/>
<rect x="914.91" y="721.40" width="5.2" height="27.40" fill="#d9505e"/>
<rect x="920.11" y="721.40" width="5.2" height="27.20" fill="#db5361"/>
<rect x="940.84" y="721.40" width="5.2" height="5.60" fill="#d9505e"/>
<rect x="946.04" y="721.40" width="5.2" height="4.00" fill="#db5361"/>
<rect x="953.81" y="712.00" width="5.2" height="9.40" fill="#3568d9"/>
<rect x="959.01" y="712.00" width="5.2" height="9.40" fill="#3ec4e8"/>
<rect x="966.77" y="721.40" width="5.2" height="5.30" fill="#d9505e"/>
<rect x="971.98" y="721.40" width="5.2" height="5.30" fill="#db5361"/>
<rect x="979.74" y="721.10" width="5.2" height="0.30" fill="#3568d9"/>
<rect x="984.94" y="721.10" width="5.2" height="0.30" fill="#3ec4e8"/>
<rect x="992.71" y="684.90" width="5.2" height="36.50" fill="#3568d9"/>
<rect x="997.91" y="685.10" width="5.2" height="36.30" fill="#3ec4e8"/>
<rect x="1005.67" y="681.80" width="5.2" height="39.60" fill="#3568d9"/>
<rect x="1010.87" y="680.60" width="5.2" height="40.80" fill="#3ec4e8"/>
<rect x="1018.64" y="721.40" width="5.2" height="0.30" fill="#d9505e"/>
<rect x="1023.84" y="721.40" width="5.2" height="0.30" fill="#db5361"/>
<rect x="1031.60" y="721.40" width="5.2" height="41.40" fill="#d9505e"/>
<rect x="1036.80" y="721.40" width="5.2" height="39.00" fill="#db5361"/>
<rect x="1044.57" y="662.80" width="5.2" height="58.60" fill="#3568d9"/>
<rect x="1049.77" y="661.70" width="5.2" height="59.70" fill="#3ec4e8"/>
<rect x="1057.54" y="721.00" width="5.2" height="0.40" fill="#3568d9"/>
<rect x="1062.74" y="721.00" width="5.2" height="0.40" fill="#3ec4e8"/>
<rect x="1070.50" y="700.70" width="5.2" height="20.70" fill="#3568d9"/>
<rect x="1075.70" y="700.20" width="5.2" height="21.20" fill="#3ec4e8"/>
<rect x="1083.47" y="709.20" width="5.2" height="12.20" fill="#3568d9"/>
<rect x="1088.67" y="708.90" width="5.2" height="12.50" fill="#3ec4e8"/>
<rect x="1096.43" y="699.10" width="5.2" height="22.30" fill="#3568d9"/>
<rect x="1101.63" y="698.20" width="5.2" height="23.20" fill="#3ec4e8"/>
<rect x="1109.40" y="721.40" width="5.2" height="2.20" fill="#d9505e"/>
<rect x="1114.60" y="721.40" width="5.2" height="1.30" fill="#db5361"/>
<rect x="1122.37" y="721.40" width="5.2" height="21.40" fill="#d9505e"/>
<rect x="1127.57" y="721.40" width="5.2" height="21.20" fill="#db5361"/>
<rect x="1148.30" y="721.10" width="5.2" height="0.30" fill="#3568d9"/>
<rect x="1153.50" y="721.10" width="5.2" height="0.30" fill="#3ec4e8"/>
<rect x="1161.26" y="695.10" width="5.2" height="26.30" fill="#3568d9"/>
<rect x="1166.46" y="694.20" width="5.2" height="27.20" fill="#3ec4e8"/>
<rect x="1174.23" y="710.00" width="5.2" height="11.40" fill="#3568d9"/>
<rect x="1179.43" y="710.00" width="5.2" height="11.40" fill="#3ec4e8"/>
<rect x="1187.20" y="658.40" width="5.2" height="63.00" fill="#3568d9"/>
<rect x="1192.40" y="658.40" width="5.2" height="63.00" fill="#3ec4e8"/>
<rect x="1200.16" y="686.40" width="5.2" height="35.00" fill="#3568d9"/>
<rect x="1205.36" y="686.40" width="5.2" height="35.00" fill="#3ec4e8"/>
<rect x="1213.13" y="721.40" width="5.2" height="1.10" fill="#d9505e"/>
<rect x="1218.33" y="721.40" width="5.2" height="0.50" fill="#db5361"/>
<rect x="1226.09" y="703.80" width="5.2" height="17.60" fill="#3568d9"/>
<rect x="1231.29" y="703.10" width="5.2" height="18.30" fill="#3ec4e8"/>
<rect x="1239.06" y="686.00" width="5.2" height="35.40" fill="#3568d9"/>
<rect x="1244.26" y="686.00" width="5.2" height="35.40" fill="#3ec4e8"/>
<rect x="1252.03" y="712.30" width="5.2" height="9.10" fill="#3568d9"/>
<rect x="1257.23" y="710.50" width="5.2" height="10.90" fill="#3ec4e8"/>
<rect x="1264.99" y="721.40" width="5.2" height="9.60" fill="#d9505e"/>
<rect x="1270.19" y="721.40" width="5.2" height="6.70" fill="#db5361"/>
<rect x="1277.96" y="721.40" width="5.2" height="120.60" fill="#d9505e"/>
<rect x="1283.16" y="721.40" width="5.2" height="120.60" fill="#db5361"/>
<rect x="1290.92" y="712.00" width="5.2" height="9.40" fill="#3568d9"/>
<rect x="1296.12" y="710.90" width="5.2" height="10.50" fill="#3ec4e8"/>
<rect x="1303.89" y="701.40" width="5.2" height="20.00" fill="#3568d9"/>
<rect x="1309.09" y="698.90" width="5.2" height="22.50" fill="#3ec4e8"/>
<rect x="1316.86" y="713.60" width="5.2" height="7.80" fill="#3568d9"/>
<rect x="1322.06" y="712.70" width="5.2" height="8.70" fill="#3ec4e8"/>
<rect x="1329.82" y="721.40" width="5.2" height="9.10" fill="#d9505e"/>
<rect x="1335.02" y="721.40" width="5.2" height="8.70" fill="#db5361"/>
<rect x="1342.79" y="721.40" width="5.2" height="6.00" fill="#d9505e"/>
<rect x="1347.99" y="721.40" width="5.2" height="6.50" fill="#db5361"/>
<rect x="1355.75" y="712.00" width="5.2" height="9.40" fill="#3568d9"/>
<rect x="1360.95" y="712.00" width="5.2" height="9.40" fill="#3ec4e8"/>
<rect x="1368.72" y="721.40" width="5.2" height="8.50" fill="#d9505e"/>
<rect x="1373.92" y="721.40" width="5.2" height="1.80" fill="#db5361"/>
<rect x="1381.69" y="690.20" width="5.2" height="31.20" fill="#3568d9"/>
<rect x="1386.89" y="689.30" width="5.2" height="32.10" fill="#3ec4e8"/>
<rect x="1394.65" y="715.20" width="5.2" height="6.20" fill="#3568d9"/>
<rect x="1399.85" y="715.40" width="5.2" height="6.00" fill="#3ec4e8"/>
<rect x="1407.62" y="709.60" width="5.2" height="11.80" fill="#3568d9"/>
<rect x="1412.82" y="709.40" width="5.2" height="12.00" fill="#3ec4e8"/>
<rect x="1420.58" y="694.70" width="5.2" height="26.70" fill="#3568d9"/>
<rect x="1425.78" y="694.20" width="5.2" height="27.20" fill="#3ec4e8"/>
<rect x="1433.55" y="714.10" width="5.2" height="7.30" fill="#3568d9"/>
<rect x="1438.75" y="714.10" width="5.2" height="7.30" fill="#3ec4e8"/>
<rect x="1446.52" y="708.50" width="5.2" height="12.90" fill="#3568d9"/>
<rect x="1451.72" y="708.70" width="5.2" height="12.70" fill="#3ec4e8"/>
<rect x="1459.48" y="710.00" width="5.2" height="11.40" fill="#3568d9"/>
<rect x="1464.68" y="710.00" width="5.2" height="11.40" fill="#3ec4e8"/>
<rect x="1485.41" y="719.20" width="5.2" height="2.20" fill="#3568d9"/>
<rect x="1490.61" y="718.70" width="5.2" height="2.70" fill="#3ec4e8"/>
<rect x="1498.38" y="620.50" width="5.2" height="100.90" fill="#3568d9"/>
<rect x="1503.58" y="620.50" width="5.2" height="100.90" fill="#3ec4e8"/>
<text x="172.6" y="892.5" text-anchor="end" font-size="14" fill="#b3b8c1" transform="rotate(-45 172.6 892.5)">2023-03-21</text>
<text x="211.5" y="892.5" text-anchor="end" font-size="14" fill="#b3b8c1" transform="rotate(-45 211.5 892.5)">2023-03-27</text>
<text x="250.4" y="892.5" text-anchor="end" font-size="14" fill="#b3b8c1" transform="rotate(-45 250.4 892.5)">2023-04-11</text>
<text x="289.3" y="892.5" text-anchor="end" font-size="14" fill="#b3b8c1" transform="rotate(-45 289.3 892.5)">2023-04-14</text>
<text x="328.2" y="892.5" text-anchor="end" font-size="14" fill="#b3b8c1" transform="rotate(-45 328.2 892.5)">2023-04-21</text>
<text x="367.1" y="892.5" text-anchor="end" font-size="14" fill="#b3b8c1" transform="rotate(-45 367.1 892.5)">2023-05-02</text>
<text x="406.0" y="892.5" text-anchor="end" font-size="14" fill="#b3b8c1" transform="rotate(-45 406.0 892.5)">2023-05-05</text>
<text x="444.9" y="892.5" text-anchor="end" font-size="14" fill="#b3b8c1" transform="rotate(-45 444.9 892.5)">2023-05-11</text>
<text x="483.8" y="892.5" text-anchor="end" font-size="14" fill="#b3b8c1" transform="rotate(-45 483.8 892.5)">2023-05-19</text>
<text x="522.7" y="892.5" text-anchor="end" font-size="14" fill="#b3b8c1" transform="rotate(-45 522.7 892.5)">2023-05-26</text>
<text x="561.6" y="892.5" text-anchor="end" font-size="14" fill="#b3b8c1" transform="rotate(-45 561.6 892.5)">2023-06-02</text>
<text x="600.5" y="892.5" text-anchor="end" font-size="14" fill="#b3b8c1" transform="rotate(-45 600.5 892.5)">2023-06-07</text>
<text x="639.4" y="892.5" text-anchor="end" font-size="14" fill="#b3b8c1" transform="rotate(-45 639.4 892.5)">2023-06-12</text>
<text x="678.3" y="892.5" text-anchor="end" font-size="14" fill="#b3b8c1" transform="rotate(-45 678.3 892.5)">2023-06-20</text>
<text x="717.2" y="892.5" text-anchor="end" font-size="14" fill="#b3b8c1" transform="rotate(-45 717.2 892.5)">2023-06-23</text>
<text x="756.1" y="892.5" text-anchor="end" font-size="14" fill="#b3b8c1" transform="rotate(-45 756.1 892.5)">2023-07-12</text>
<text x="795.0" y="892.5" text-anchor="end" font-size="14" fill="#b3b8c1" transform="rotate(-45 795.0 892.5)">2023-07-25</text>
<text x="833.8" y="892.5" text-anchor="end" font-size="14" fill="#b3b8c1" transform="rotate(-45 833.8 892.5)">2023-07-31</text>
<text x="872.7" y="892.5" text-anchor="end" font-size="14" fill="#b3b8c1" transform="rotate(-45 872.7 892.5)">2023-08-08</text>
<text x="911.6" y="892.5" text-anchor="end" font-size="14" fill="#b3b8c1" transform="rotate(-45 911.6 892.5)">2023-08-16</text>
<text x="950.5" y="892.5" text-anchor="end" font-size="14" fill="#b3b8c1" transform="rotate(-45 950.5 892.5)">2023-08-23</text>
<text x="989.4" y="892.5" text-anchor="end" font-size="14" fill="#b3b8c1" transform="rotate(-45 989.4 892.5)">2023-08-28</text>
<text x="1028.3" y="892.5" text-anchor="end" font-size="14" fill="#b3b8c1" transform="rotate(-45 1028.3 892.5)">2023-09-01</text>
<text x="1067.2" y="892.5" text-anchor="end" font-size="14" fill="#b3b8c1" transform="rotate(-45 1067.2 892.5)">2023-09-07</text>
<text x="1106.1" y="892.5" text-anchor="end" font-size="14" fill="#b3b8c1" transform="rotate(-45 1106.1 892.5)">2023-09-12</text>
<text x="1145.0" y="892.5" text-anchor="end" font-size="14" fill="#b3b8c1" transform="rotate(-45 1145.0 892.5)">2023-09-15</text>
<text x="1183.9" y="892.5" text-anchor="end" font-size="14" fill="#b3b8c1" transform="rotate(-45 1183.9 892.5)">2023-09-20</text>
<text x="1222.8" y="892.5" text-anchor="end" font-size="14" fill="#b3b8c1" transform="rotate(-45 1222.8 892.5)">2023-09-28</text>
<text x="1261.7" y="892.5" text-anchor="end" font-size="14" fill="#b3b8c1" transform="rotate(-45 1261.7 892.5)">2023-10-04</text>
<text x="1300.6" y="892.5" text-anchor="end" font-size="14" fill="#b3b8c1" transform="rotate(-45 1300.6 892.5)">2023-10-10</text>
<text x="1339.5" y="892.5" text-anchor="end" font-size="14" fill="#b3b8c1" transform="rotate(-45 1339.5 892.5)">2023-10-19</text>
<text x="1378.4" y="892.5" text-anchor="end" font-size="14" fill="#b3b8c1" transform="rotate(-45 1378.4 892.5)">2023-10-31</text>
<text x="1417.3" y="892.5" text-anchor="end" font-size="14" fill="#b3b8c1" transform="rotate(-45 1417.3 892.5)">2023-11-07</text>
<text x="1456.2" y="892.5" text-anchor="end" font-size="14" fill="#b3b8c1" transform="rotate(-45 1456.2 892.5)">2024-04-15</text>
<text x="1495.1" y="892.5" text-anchor="end" font-size="14" fill="#b3b8c1" transform="rotate(-45 1495.1 892.5)">2024-05-15</text>
<rect x="1492" y="581.4" width="17.2" height="1.8" fill="#6e8192"/>
<rect x="1492" y="586.1" width="17.2" height="1.8" fill="#6e8192"/>
<rect x="1492" y="590.8000000000001" width="17.2" height="1.8" fill="#6e8192"/>
</svg>
</body></html>
